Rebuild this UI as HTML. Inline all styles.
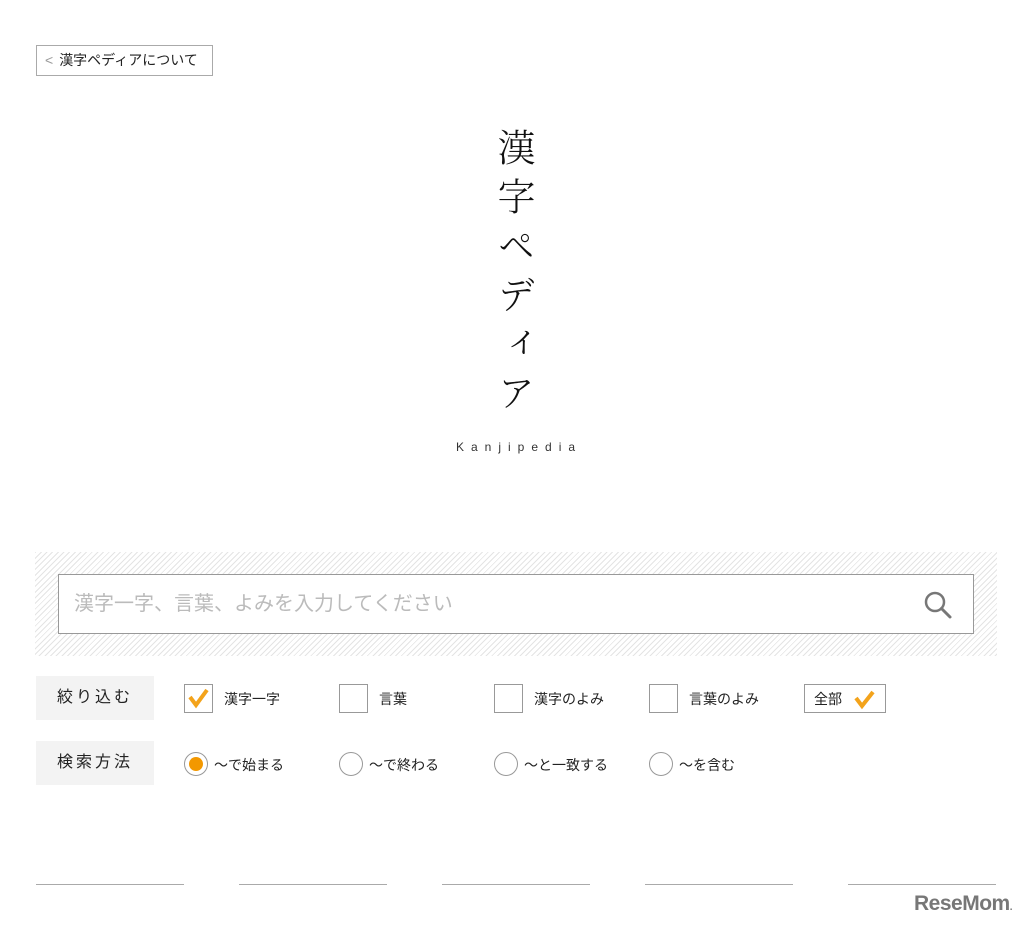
<!DOCTYPE html>
<html><head><meta charset="utf-8"><style>
body{margin:0;width:1026px;height:927px;background:#fff;font-family:"Liberation Sans","Noto Sans CJK JP",sans-serif;color:#222;position:relative;overflow:hidden}
.abs{position:absolute}
.back{left:36px;top:45px;width:177px;height:31px;border:1px solid #aaa;box-sizing:border-box;font-size:14px;line-height:29px;padding-left:8px;white-space:nowrap}
.back span{color:#999;margin-right:6px}
.title{left:490px;top:128px;writing-mode:vertical-rl;font-family:"Noto Serif CJK JP","Noto Serif CJK SC",serif;font-size:38px;letter-spacing:11px;color:#111;font-weight:300;line-height:52px}
.kanji{left:456px;top:440px;font-size:12px;letter-spacing:7px;color:#333}
.hatch{left:35px;top:552px;width:962px;height:104px;background:repeating-linear-gradient(135deg,#e4e4e4 0 1px,#fff 1px 4px)}
.input{left:58px;top:574px;width:916px;height:60px;border:1px solid #999;box-sizing:border-box;background:#fff;font-size:20px;color:#bbb;line-height:58px;padding-left:15px}
.lab{width:118px;height:44px;background:#f3f3f3;font-size:16px;letter-spacing:3px;line-height:44px;text-align:center}
.cb{width:29px;height:29px;border:1px solid #999;box-sizing:border-box}
.t{font-size:14px;white-space:nowrap}
.rd{width:24px;height:24px;border:1px solid #999;border-radius:50%;box-sizing:border-box}
.line{top:884px;width:148px;height:1px;background:#aaa}
</style></head><body>
<div class="abs back"><span>&lt;</span>漢字ペディアについて</div>
<div class="abs title">漢字ペディア</div>
<div class="abs kanji">Kanjipedia</div>
<div class="abs hatch"></div>
<div class="abs input">漢字一字、言葉、よみを入力してください
<svg style="position:absolute;right:20px;top:15px" width="30" height="30" viewBox="0 0 30 30"><circle cx="12" cy="12" r="9" fill="none" stroke="#777" stroke-width="2.5"/><line x1="18.5" y1="18.5" x2="27" y2="27" stroke="#777" stroke-width="3" stroke-linecap="round"/></svg></div>

<div class="abs lab" style="left:36px;top:676px">絞り込む</div>
<div class="abs lab" style="left:36px;top:741px">検索方法</div>

<div class="abs cb" style="left:184px;top:684px"><svg width="27" height="27" viewBox="0 0 27 27"><path d="M5 12 L11 20 L22 5" fill="none" stroke="#f3a31b" stroke-width="4"/></svg></div>
<div class="abs t" style="left:224px;top:689px">漢字一字</div>
<div class="abs cb" style="left:339px;top:684px"></div>
<div class="abs t" style="left:379px;top:689px">言葉</div>
<div class="abs cb" style="left:494px;top:684px"></div>
<div class="abs t" style="left:534px;top:689px">漢字のよみ</div>
<div class="abs cb" style="left:649px;top:684px"></div>
<div class="abs t" style="left:689px;top:689px">言葉のよみ</div>
<div class="abs" style="left:804px;top:684px;width:82px;height:29px;border:1px solid #999;box-sizing:border-box"><span class="t" style="position:absolute;left:9px;top:4px">全部</span><svg style="position:absolute;left:48px;top:3px" width="24" height="22" viewBox="0 0 24 22"><path d="M3 10 L9 18 L20 4" fill="none" stroke="#f3a31b" stroke-width="4"/></svg></div>

<div class="abs rd" style="left:184px;top:752px"><div style="position:absolute;left:4px;top:4px;width:14px;height:14px;border-radius:50%;background:#f39800"></div></div>
<div class="abs t" style="left:214px;top:755px">～で始まる</div>
<div class="abs rd" style="left:339px;top:752px"></div>
<div class="abs t" style="left:369px;top:755px">～で終わる</div>
<div class="abs rd" style="left:494px;top:752px"></div>
<div class="abs t" style="left:524px;top:755px">～と一致する</div>
<div class="abs rd" style="left:649px;top:752px"></div>
<div class="abs t" style="left:679px;top:755px">～を含む</div>

<div class="abs line" style="left:36px"></div>
<div class="abs line" style="left:239px"></div>
<div class="abs line" style="left:442px"></div>
<div class="abs line" style="left:645px"></div>
<div class="abs line" style="left:848px"></div>
<div class="abs" style="left:914px;top:892px;font-size:21px;font-weight:bold;color:#777;letter-spacing:-0.5px">ReseMom<span style="font-size:10px">.</span></div>
</body></html>
